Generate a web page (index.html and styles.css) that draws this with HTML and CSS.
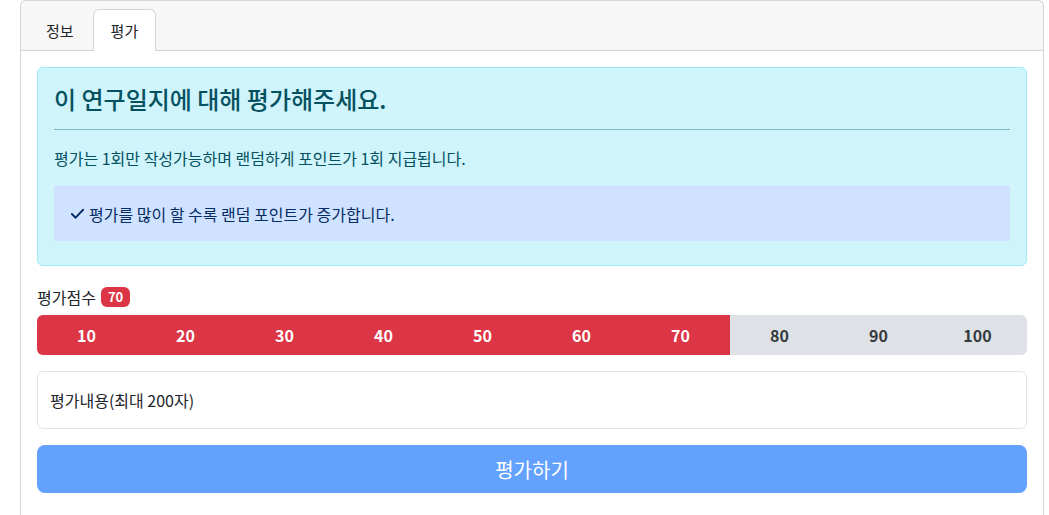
FILE: index.html
```html
<!DOCTYPE html>
<html>
<head>
    <title>연구일지 평가</title>
    <link rel="stylesheet" href="styles.css">
</head>
<body>
    <div class="card">
        <div class="card-header">
            <ul class="tabs">
                <li class="tab">정보</li>
                <li class="tab active">평가</li>
            </ul>
        </div>
        <div class="card-body">
            <div class="alert">
                <h4 class="alert-title">이 연구일지에 대해 평가해주세요.</h4>
                <hr>
                <p class="alert-text">평가는 1회만 작성가능하며 랜덤하게 포인트가 1회 지급됩니다.</p>
                <div class="tip">
                    <svg class="check" width="15" height="15" viewBox="0 0 16 16">
                        <path d="M2 8.5l4 4L14 4" fill="none" stroke="currentColor" stroke-width="2" stroke-linecap="round" stroke-linejoin="round"/>
                    </svg>
                    평가를 많이 할 수록 랜덤 포인트가 증가합니다.
                </div>
            </div>

            <div class="score-label">평가점수 <span class="badge">70</span></div>
            <div class="score-bar">
                <span class="seg on">10</span>
                <span class="seg on">20</span>
                <span class="seg on">30</span>
                <span class="seg on">40</span>
                <span class="seg on">50</span>
                <span class="seg on">60</span>
                <span class="seg on">70</span>
                <span class="seg">80</span>
                <span class="seg">90</span>
                <span class="seg">100</span>
            </div>

            <input type="text" class="review" placeholder="평가내용(최대 200자)">

            <button class="submit" disabled>평가하기</button>
        </div>
    </div>
</body>
</html>
```

FILE: styles.css
```css
body {
    margin: 0;
    padding: 0 20px;
    font-family: "Noto Sans CJK KR", "Noto Sans", sans-serif;
    font-size: 16px;
    color: #212529;
    background-color: #fff;
}
.card {
    width: 1024px;
    box-sizing: border-box;
    border: 1px solid #d4d4d4;
    border-bottom: none;
    border-radius: 6px 6px 0 0;
    height: 530px;
}
.card-header {
    background-color: #f7f7f7;
    border-bottom: 1px solid #d4d4d4;
    border-radius: 6px 6px 0 0;
    padding: 8px 16px 0;
    height: 41px;
}
.tabs {
    list-style: none;
    margin: 0 0 0 -8px;
    padding: 0;
    display: flex;
}
.tab {
    height: 41px;
    box-sizing: border-box;
    padding: 0 16px;
    line-height: 41px;
    font-size: 15px;
    border: 1px solid transparent;
    border-bottom: none;
    border-radius: 6px 6px 0 0;
    color: #212529;
}
.tab.active {
    background-color: #fff;
    border-color: #d4d4d4;
    height: 42px;
    margin-left: 2px;
    padding: 0 17px;
}
.card-body {
    padding: 16px;
}
.alert {
    background-color: #cff4fc;
    border: 1px solid #9eeaf9;
    border-radius: 6px;
    color: #055160;
    padding: 16px 16px 24px;
}
.alert-title {
    margin: 0;
    font-size: 24px;
    font-weight: 500;
    line-height: 30px;
}
.alert hr {
    border: none;
    border-top: 1px solid #7fb6c1;
    margin: 15px 0 16px;
}
.alert-text {
    margin: 0 0 16px;
    line-height: 24px;
}
.tip {
    background-color: #cfe2ff;
    color: #052c65;
    height: 55px;
    display: flex;
    align-items: center;
    gap: 4px;
    padding: 0 16px;
}
.check {
    color: #052c65;
}
.score-label {
    margin-top: 21px;
    display: flex;
    align-items: center;
    gap: 5px;
    height: 20px;
}
.badge {
    background-color: #dc3545;
    color: #fff;
    font-size: 13px;
    font-weight: 700;
    border-radius: 6px;
    padding: 0 7px;
    height: 20px;
    line-height: 20px;
}
.score-bar {
    margin-top: 8px;
    display: flex;
    height: 40px;
    border-radius: 6px;
    overflow: hidden;
    background-color: #dee2e6;
}
.seg {
    flex: 1;
    display: flex;
    align-items: center;
    justify-content: center;
    font-weight: 700;
    color: #343a40;
}
.seg.on {
    background-color: #dc3545;
    color: #fff;
}
.review {
    display: block;
    width: 100%;
    box-sizing: border-box;
    margin-top: 16px;
    height: 58px;
    border: 1px solid #dee2e6;
    border-radius: 6px;
    padding: 0 12px;
    font-family: inherit;
    font-size: 16px;
}
.review::placeholder {
    color: #212529;
}
.submit {
    display: block;
    width: 100%;
    margin-top: 16px;
    height: 48px;
    border: none;
    border-radius: 8px;
    background-color: #62a1fe;
    color: #fff;
    font-family: inherit;
    font-size: 20px;
}
```
